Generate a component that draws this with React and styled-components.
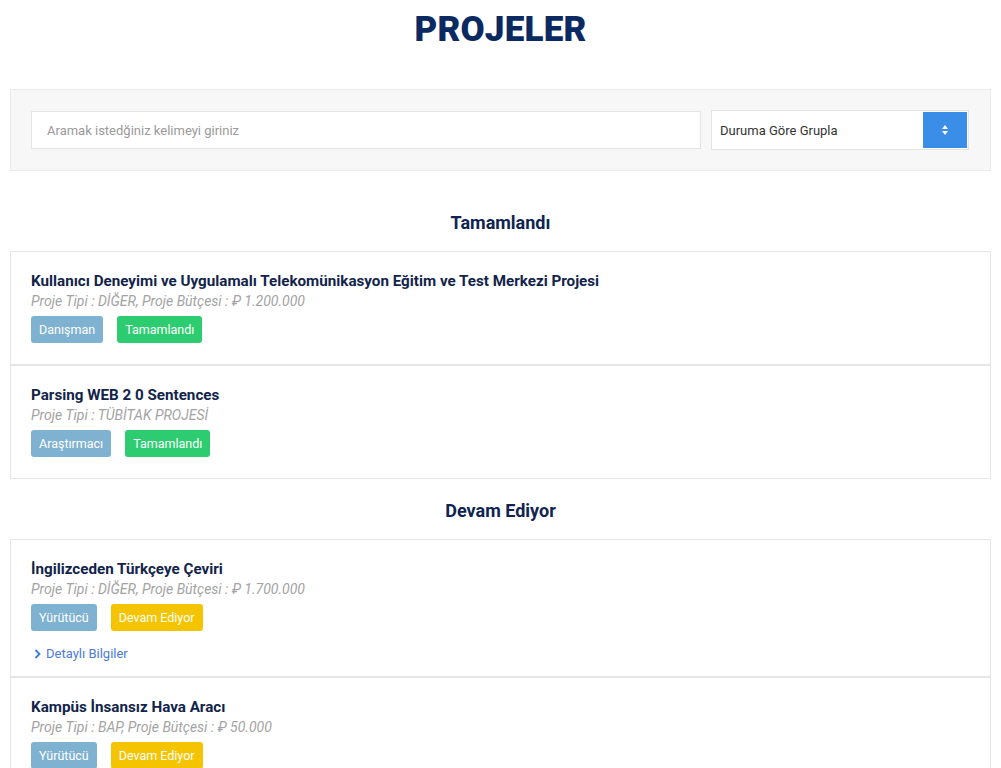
import React from "react";
import styled, { createGlobalStyle } from "styled-components";

const Global = createGlobalStyle`
  * { box-sizing: border-box; }
  body { margin: 0; background: #fff; font-family: "Roboto", "Open Sans", sans-serif; }
`;

const Page = styled.div`
  padding: 0 10px;
`;

const PageTitle = styled.h1`
  margin: 0;
  padding-top: 8px;
  margin-bottom: 37px;
  text-align: center;
  font-size: 35px;
  line-height: 44px;
  font-weight: 900;
  letter-spacing: 0.2px;
  color: #0b2a62;
`;

const FilterBox = styled.div`
  display: flex;
  align-items: center;
  gap: 10px;
  padding: 20px 21px 20px 20px;
  background: #f7f7f7;
  border: 1px solid #ebebeb;
  margin-bottom: 20px;
`;

const SearchInput = styled.input`
  flex: 1;
  height: 38px;
  border: 1px solid #e4e4e4;
  background: #fff;
  padding: 0 15px;
  font-family: inherit;
  font-size: 13px;
  color: #333;
  outline: none;
  &::placeholder { color: #9a9a9a; }
`;

const Select = styled.div`
  width: 258px;
  height: 40px;
  border: 1px solid #e4e4e4;
  background: #fff;
  display: flex;
  align-items: stretch;
  padding: 1px;
`;

const SelectLabel = styled.div`
  flex: 1;
  display: flex;
  align-items: center;
  padding-left: 7px;
  font-size: 13px;
  color: #333;
`;

const SelectArrow = styled.div`
  width: 44px;
  background: #3a8ee8;
  display: flex;
  align-items: center;
  justify-content: center;
`;

const SectionTitle = styled.h2`
  margin: 0;
  padding: 20px 0 16px;
  text-align: center;
  font-size: 18px;
  line-height: 24px;
  font-weight: 700;
  color: #0f2550;
`;

const Card = styled.div`
  border: 1px solid #e6e6e6;
  padding: 19px 20px 21px;
`;

const CardTitle = styled.div`
  font-size: 15.2px;
  line-height: 20px;
  font-weight: 700;
  color: #12244a;
`;

const CardMeta = styled.div`
  font-size: 14px;
  line-height: 20px;
  font-style: italic;
  color: #a3a3a3;
`;

const BadgeRow = styled.div`
  display: flex;
  gap: 14px;
  margin-top: 5px;
`;

const Badge = styled.span`
  display: inline-flex;
  align-items: center;
  height: 27px;
  padding: 0 8px;
  border-radius: 3px;
  font-size: 12.5px;
  color: #fff;
  background: ${(p) => p.$bg};
`;

const DetailLink = styled.a`
  display: flex;
  width: fit-content;
  align-items: center;
  gap: 5px;
  margin-top: 16px;
  margin-bottom: -6px;
  margin-left: 3px;
  font-size: 13px;
  line-height: 14px;
  color: #4a7bd8;
  text-decoration: none;
  cursor: pointer;
`;

const roleColor = "#7fb1d0";
const statusColors = { "Tamamlandı": "#2ecc71", "Devam Ediyor": "#f5c400" };

const sections = [
  {
    title: "Tamamlandı",
    items: [
      {
        name: "Kullanıcı Deneyimi ve Uygulamalı Telekomünikasyon Eğitim ve Test Merkezi Projesi",
        meta: "Proje Tipi : DİĞER, Proje Bütçesi : ₽ 1.200.000",
        role: "Danışman",
        status: "Tamamlandı",
      },
      {
        name: "Parsing WEB 2 0 Sentences",
        meta: "Proje Tipi : TÜBİTAK PROJESİ",
        role: "Araştırmacı",
        status: "Tamamlandı",
      },
    ],
  },
  {
    title: "Devam Ediyor",
    items: [
      {
        name: "İngilizceden Türkçeye Çeviri",
        meta: "Proje Tipi : DİĞER, Proje Bütçesi : ₽ 1.700.000",
        role: "Yürütücü",
        status: "Devam Ediyor",
        details: true,
      },
      {
        name: "Kampüs İnsansız Hava Aracı",
        meta: "Proje Tipi : BAP, Proje Bütçesi : ₽ 50.000",
        role: "Yürütücü",
        status: "Devam Ediyor",
      },
    ],
  },
];

export default function App() {
  return (
    <Page>
      <Global />
      <PageTitle>PROJELER</PageTitle>
      <FilterBox>
        <SearchInput placeholder="Aramak istedğiniz kelimeyi giriniz" />
        <Select>
          <SelectLabel>Duruma Göre Grupla</SelectLabel>
          <SelectArrow>
            <svg width="8" height="12" viewBox="0 0 8 12">
              <path d="M4 1 L7 5 H1 Z" fill="#fff" />
              <path d="M4 11 L7 7 H1 Z" fill="#fff" />
            </svg>
          </SelectArrow>
        </Select>
      </FilterBox>
      {sections.map((s) => (
        <section key={s.title}>
          <SectionTitle>{s.title}</SectionTitle>
          {s.items.map((it) => (
            <Card key={it.name}>
              <CardTitle>{it.name}</CardTitle>
              <CardMeta>{it.meta}</CardMeta>
              <BadgeRow>
                <Badge $bg={roleColor}>{it.role}</Badge>
                <Badge $bg={statusColors[it.status]}>{it.status}</Badge>
              </BadgeRow>
              {it.details && (
                <DetailLink>
                  <svg width="7" height="10" viewBox="0 0 7 10">
                    <path d="M1.5 1 L5.5 5 L1.5 9" fill="none" stroke="#3a7be0" strokeWidth="1.8" />
                  </svg>
                  Detaylı Bilgiler
                </DetailLink>
              )}
            </Card>
          ))}
        </section>
      ))}
    </Page>
  );
}
